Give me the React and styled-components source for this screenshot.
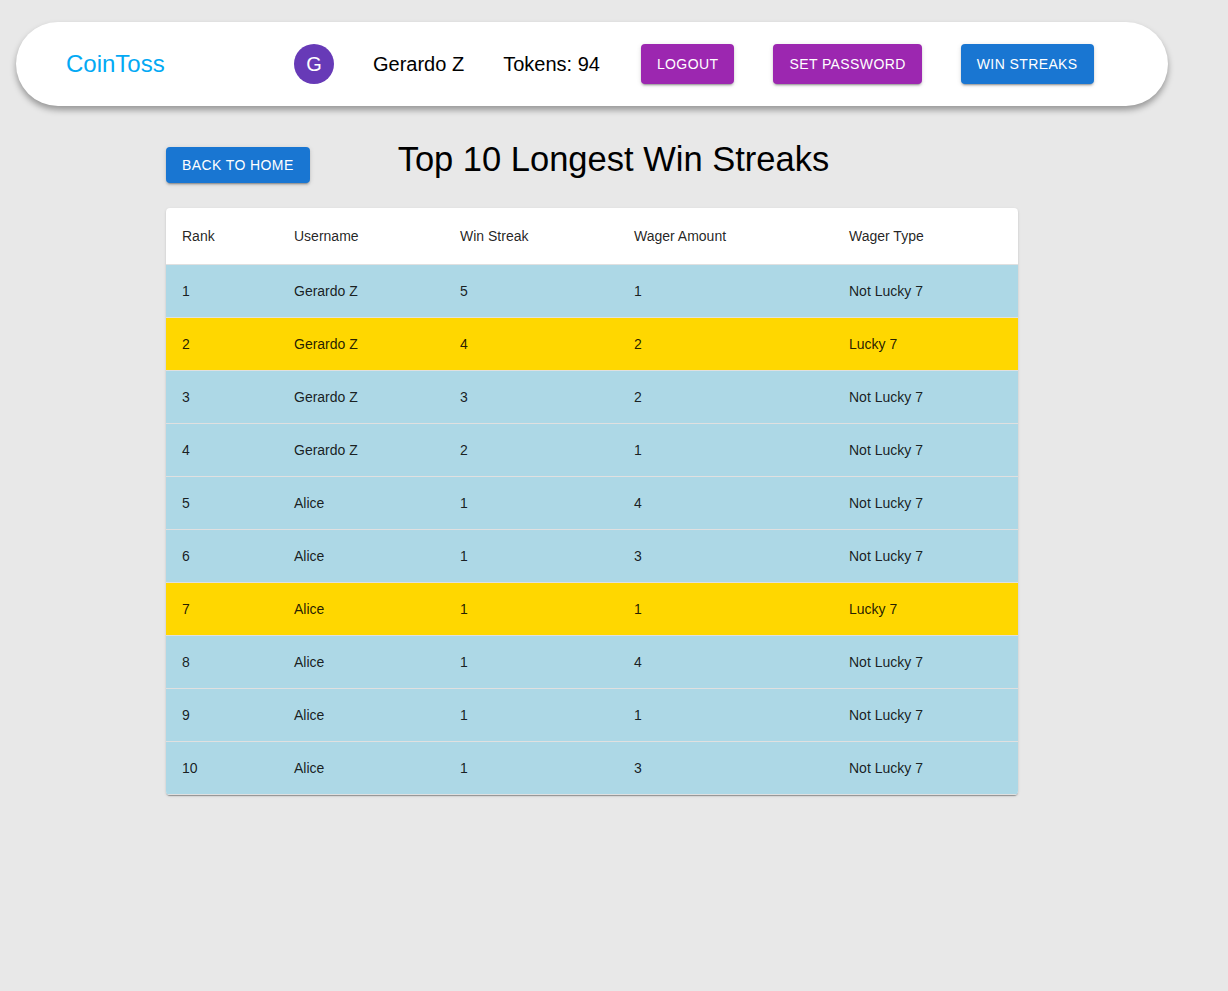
import React from 'react';
import styled, {createGlobalStyle} from 'styled-components';

const GlobalStyle = createGlobalStyle`
  html, body {
    background-color: #e8e8e8;
  }
  body {
    margin: 8px;
    font-family: "Liberation Sans", Arial, sans-serif;
  }
`;

const Page = styled.div`
  padding-top: 14px;
  height: 960px;
`;

const NavBar = styled.div`
  box-sizing: border-box;
  width: 1152px;
  height: 84px;
  margin-left: 8px;
  background-color: #fff;
  border-radius: 42px;
  box-shadow: 0 4px 6px rgba(0, 0, 0, 0.35);
  display: flex;
  align-items: center;
  padding-left: 50px;
`;

const Logo = styled.div`
  color: #03a9f4;
  font-size: 24px;
  width: 228px;
`;

const Avatar = styled.div`
  width: 40px;
  height: 40px;
  border-radius: 50%;
  background-color: #673ab7;
  color: #fff;
  font-size: 20px;
  display: flex;
  align-items: center;
  justify-content: center;
  margin-right: 39px;
`;

const NavText = styled.div`
  font-size: 20px;
  color: #000;
  margin-right: ${props => props.gap}px;
`;

const Button = styled.button`
  border: none;
  border-radius: 4px;
  font-family: "Liberation Sans", Arial, sans-serif;
  font-size: 14px;
  font-weight: 500;
  letter-spacing: 0.4px;
  text-transform: uppercase;
  color: #fff;
  background-color: ${props => props.color};
  height: ${props => props.h || 40}px;
  padding: 0 16px;
  margin-right: ${props => props.gap || 0}px;
  box-shadow: 0 3px 1px -2px rgba(0,0,0,0.2), 0 2px 2px 0 rgba(0,0,0,0.14), 0 1px 5px 0 rgba(0,0,0,0.12);
  cursor: pointer;
`;

const Content = styled.div`
  width: 852px;
  margin: 0 0 0 158px;
`;

const HeaderRow = styled.div`
  display: flex;
  align-items: center;
  margin-top: 41px;
  height: 36px;
`;

const Title = styled.h1`
  margin: 0 0 0 88px;
  font-size: 34.5px;
  font-weight: 400;
  color: #000;
  position: relative;
  top: -6px;
`;

const TableCard = styled.div`
  margin-top: 25px;
  background-color: #fff;
  border-radius: 4px;
  overflow: hidden;
  box-shadow: 0 2px 1px -1px rgba(0,0,0,0.2), 0 1px 1px 0 rgba(0,0,0,0.14), 0 1px 3px 0 rgba(0,0,0,0.12);
`;

const Table = styled.table`
  width: 100%;
  border-collapse: collapse;
  font-size: 14px;
  color: rgba(0, 0, 0, 0.87);
`;

const Th = styled.th`
  text-align: left;
  font-weight: 400;
  height: 56px;
  padding: 0 16px;
  border-bottom: 1px solid #e0e0e0;
  width: ${props => props.w}px;
`;

const Row = styled.tr`
  background-color: ${props => props.$lucky ? '#ffd700' : '#add8e6'};
`;

const Td = styled.td`
  height: 52px;
  padding: 0 16px;
  border-bottom: 1px solid #e0e0e0;
`;

const columns = [
    {label: 'Rank', w: 80},
    {label: 'Username', w: 134},
    {label: 'Win Streak', w: 142},
    {label: 'Wager Amount', w: 183},
    {label: 'Wager Type'},
];

const streaks = [
    [1, 'Gerardo Z', 5, 1, 'Not Lucky 7'],
    [2, 'Gerardo Z', 4, 2, 'Lucky 7'],
    [3, 'Gerardo Z', 3, 2, 'Not Lucky 7'],
    [4, 'Gerardo Z', 2, 1, 'Not Lucky 7'],
    [5, 'Alice', 1, 4, 'Not Lucky 7'],
    [6, 'Alice', 1, 3, 'Not Lucky 7'],
    [7, 'Alice', 1, 1, 'Lucky 7'],
    [8, 'Alice', 1, 4, 'Not Lucky 7'],
    [9, 'Alice', 1, 1, 'Not Lucky 7'],
    [10, 'Alice', 1, 3, 'Not Lucky 7'],
];

const App = () => {
    return (
        <Page>
            <GlobalStyle/>
            <NavBar>
                <Logo>CoinToss</Logo>
                <Avatar>G</Avatar>
                <NavText gap={39}>Gerardo Z</NavText>
                <NavText gap={41}>Tokens: 94</NavText>
                <Button color="#9c27b0" gap={39}>Logout</Button>
                <Button color="#9c27b0" gap={39}>Set Password</Button>
                <Button color="#1976d2">Win Streaks</Button>
            </NavBar>

            <Content>
                <HeaderRow>
                    <Button color="#1976d2" h={36}>Back to Home</Button>
                    <Title>Top 10 Longest Win Streaks</Title>
                </HeaderRow>

                <TableCard>
                    <Table>
                        <thead>
                        <tr>
                            {columns.map(col => (
                                <Th key={col.label} w={col.w}>{col.label}</Th>
                            ))}
                        </tr>
                        </thead>
                        <tbody>
                        {streaks.map(row => (
                            <Row key={row[0]} $lucky={row[4] === 'Lucky 7'}>
                                {row.map((cell, i) => (
                                    <Td key={i}>{cell}</Td>
                                ))}
                            </Row>
                        ))}
                        </tbody>
                    </Table>
                </TableCard>
            </Content>
        </Page>
    );
};

export default App;
